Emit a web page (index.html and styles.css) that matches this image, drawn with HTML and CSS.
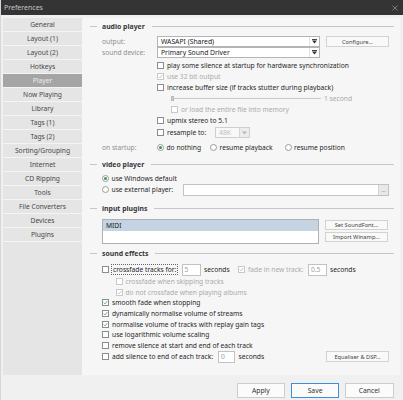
FILE: index.html
```html
<!DOCTYPE html>
<html>
<head>
<meta charset="utf-8">
<link rel="stylesheet" href="styles.css">
</head>
<body>
<div class="window">
  <div class="titlebar">
    <span>Preferences</span>
    <svg class="close" width="6" height="6" viewBox="0 0 6 6"><path d="M0.5 0.5 L5.5 5.5 M5.5 0.5 L0.5 5.5" stroke="#9a9a9a" stroke-width="0.7"/></svg>
  </div>
  <div class="main">
    <nav class="sidebar">
      <div class="nav-item">General</div>
      <div class="nav-item">Layout (1)</div>
      <div class="nav-item">Layout (2)</div>
      <div class="nav-item">Hotkeys</div>
      <div class="nav-item active">Player</div>
      <div class="nav-item">Now Playing</div>
      <div class="nav-item">Library</div>
      <div class="nav-item">Tags (1)</div>
      <div class="nav-item">Tags (2)</div>
      <div class="nav-item">Sorting/Grouping</div>
      <div class="nav-item">Internet</div>
      <div class="nav-item">CD Ripping</div>
      <div class="nav-item">Tools</div>
      <div class="nav-item">File Converters</div>
      <div class="nav-item">Devices</div>
      <div class="nav-item">Plugins</div>
    </nav>
    <div class="content">
      <div class="group-title"><span class="dash"></span><span>audio player</span><span class="rule"></span></div>
      <div class="group-body audio-body">
        <div class="row sel-row">
          <span class="label">output:</span>
          <div class="select wide"><span class="sel-text">WASAPI (Shared)</span><span class="sel-arrow"><svg width="5" height="5" viewBox="0 0 5 5"><rect x="0" y="0" width="5" height="1" fill="#444"/><polygon points="0,1.5 5,1.5 2.5,4.6" fill="#333"/></svg></span></div>
          <div class="btn btn-side">Configure...</div>
        </div>
        <div class="row sel-row">
          <span class="label">sound device:</span>
          <div class="select wide"><span class="sel-text">Primary Sound Driver</span><span class="sel-arrow"><svg width="5" height="5" viewBox="0 0 5 5"><rect x="0" y="0" width="5" height="1" fill="#444"/><polygon points="0,1.5 5,1.5 2.5,4.6" fill="#333"/></svg></span></div>
        </div>
        <div class="row ind-55 first-check">
          <span class="cb"></span><span>play some silence at startup for hardware synchronization</span>
        </div>
        <div class="row ind-55 dis">
          <span class="cb checked"><svg width="5" height="5" viewBox="0 0 5 5"><path d="M0.8 2.6 L2 3.8 L4.3 1.2" fill="none" stroke="#b0b0b0" stroke-width="0.8"/></svg></span><span>use 32 bit output</span>
        </div>
        <div class="row ind-55">
          <span class="cb"></span><span>increase buffer size (if tracks stutter during playback)</span>
        </div>
        <div class="row ind-69 slider-row">
          <span class="thumb"></span><span class="track"></span><span class="slider-val">1 second</span>
        </div>
        <div class="row ind-69 dis">
          <span class="cb"></span><span>or load the entire file into memory</span>
        </div>
        <div class="row ind-55">
          <span class="cb"></span><span>upmix stereo to 5.1</span>
        </div>
        <div class="row ind-55 resample-row">
          <span class="cb"></span><span class="resample-text">resample to:</span>
          <div class="select small dis-sel"><span class="sel-text">48K</span><span class="sel-arrow"><svg width="5" height="5" viewBox="0 0 5 5"><polygon points="0,1.5 5,1.5 2.5,4.6" fill="#b8b8b8"/></svg></span></div>
        </div>
        <div class="row startup-row">
          <span class="label">on startup:</span>
          <span class="opt opt1"><span class="radio on"><span class="dot"></span></span><span>do nothing</span></span>
          <span class="opt opt2"><span class="radio"></span><span>resume playback</span></span>
          <span class="opt"><span class="radio"></span><span>resume position</span></span>
        </div>
      </div>

      <div class="group-title video-title"><span class="dash"></span><span>video player</span><span class="rule"></span></div>
      <div class="group-body">
        <div class="row win-row">
          <span class="radio on"><span class="dot"></span></span><span>use Windows default</span>
        </div>
        <div class="row ext-row">
          <span class="radio"></span><span class="ext-label">use external player:</span>
          <div class="textbox ext-box"><span class="browse">...</span></div>
        </div>
      </div>

      <div class="group-title plugins-title"><span class="dash"></span><span>input plugins</span><span class="rule"></span></div>
      <div class="group-body">
        <div class="plugins-row">
          <div class="listbox"><div class="list-item sel">MIDI</div></div>
          <div class="btn-col">
            <div class="btn btn-side">Set SoundFont...</div>
            <div class="btn btn-side">Import Winamp...</div>
          </div>
        </div>
      </div>

      <div class="group-title fx-title"><span class="dash"></span><span>sound effects</span><span class="rule"></span></div>
      <div class="group-body">
        <div class="row cross-row">
          <span class="cb"></span><span class="focus-text">crossfade tracks for:</span>
          <span class="textbox num n5">5</span><span class="unit">seconds</span>
          <span class="cb checked dis-cb"><svg width="5" height="5" viewBox="0 0 5 5"><path d="M0.8 2.6 L2 3.8 L4.3 1.2" fill="none" stroke="#b0b0b0" stroke-width="0.8"/></svg></span><span class="fade-text dis">fade in new track:</span>
          <span class="textbox num n05">0.5</span><span class="unit2">seconds</span>
        </div>
        <div class="row fx ind-13 dis">
          <span class="cb"></span><span>crossfade when skipping tracks</span>
        </div>
        <div class="row fx ind-13 dis">
          <span class="cb checked"><svg width="5" height="5" viewBox="0 0 5 5"><path d="M0.8 2.6 L2 3.8 L4.3 1.2" fill="none" stroke="#b0b0b0" stroke-width="0.8"/></svg></span><span>do not crossfade when playing albums</span>
        </div>
        <div class="row fx">
          <span class="cb checked"><svg width="5" height="5" viewBox="0 0 5 5"><path d="M0.8 2.6 L2 3.8 L4.3 1.2" fill="none" stroke="#3f9e6a" stroke-width="0.9"/></svg></span><span>smooth fade when stopping</span>
        </div>
        <div class="row fx">
          <span class="cb checked"><svg width="5" height="5" viewBox="0 0 5 5"><path d="M0.8 2.6 L2 3.8 L4.3 1.2" fill="none" stroke="#3f9e6a" stroke-width="0.9"/></svg></span><span>dynamically normalise volume of streams</span>
        </div>
        <div class="row fx">
          <span class="cb checked"><svg width="5" height="5" viewBox="0 0 5 5"><path d="M0.8 2.6 L2 3.8 L4.3 1.2" fill="none" stroke="#3f9e6a" stroke-width="0.9"/></svg></span><span>normalise volume of tracks with replay gain tags</span>
        </div>
        <div class="row fx">
          <span class="cb"></span><span>use logarithmic volume scaling</span>
        </div>
        <div class="row fx">
          <span class="cb"></span><span>remove silence at start and end of each track</span>
        </div>
        <div class="row add-row">
          <span class="cb"></span><span class="add-text">add silence to end of each track:</span>
          <span class="textbox num n0">0</span><span>seconds</span>
          <div class="btn btn-side eq">Equaliser &amp; DSP...</div>
        </div>
      </div>
    </div>
  </div>
  <div class="footer">
    <div class="btn btn-foot">Apply</div>
    <div class="btn btn-foot save">Save</div>
    <div class="btn btn-foot">Cancel</div>
  </div>
</div>
</body>
</html>
```

FILE: styles.css
```css
html, body {
  margin: 0;
  padding: 0;
}
body {
  width: 403px;
  height: 400px;
  overflow: hidden;
  background: #f0f0f0;
  font-family: "Noto Sans", "Open Sans", sans-serif;
  font-size: 6.7px;
  color: #262626;
}
.window {
  display: flex;
  flex-direction: column;
  height: 400px;
  border-left: 1px solid #d6d6d6;
  box-sizing: border-box;
}
.titlebar {
  height: 15px;
  flex-shrink: 0;
  background: #343434;
  color: #c4c4c4;
  display: flex;
  align-items: center;
  justify-content: space-between;
  padding: 0 5px 0 3px;
  font-size: 7px;
}
.main {
  display: flex;
  height: 360px;
  padding: 3px 3px 0 2px;
  box-sizing: border-box;
}
.sidebar {
  width: 79px;
  flex-shrink: 0;
  background: #e5e5e5;
  display: flex;
  flex-direction: column;
}
.nav-item {
  height: 13px;
  border-bottom: 1px solid #f4f4f4;
  display: flex;
  align-items: center;
  justify-content: center;
  color: #474747;
}
.nav-item.active {
  background: #a5a5a5;
  color: #ececec;
}
.content {
  flex: 1;
  background: #f6f6f6;
  padding: 2px 6px 0 8px;
}
.group-title {
  height: 12px;
  display: flex;
  align-items: center;
  gap: 5px;
  font-weight: 700;
  font-size: 6.9px;
  color: #383838;
}
.dash {
  width: 7px;
  height: 1px;
  background: #c6c6c6;
}
.rule {
  flex: 1;
  height: 1px;
  background: #c6c6c6;
  margin-left: 2px;
}
.group-body {
  padding-left: 12px;
}
.audio-body {
  padding-top: 4px;
}
.row {
  display: flex;
  align-items: center;
  height: 11px;
  white-space: nowrap;
}
.label {
  width: 55px;
  flex-shrink: 0;
  color: #8e8e8e;
}
.ind-55 { padding-left: 55px; }
.ind-69 { padding-left: 69px; }
.ind-13 { padding-left: 13.5px; }
.dis { color: #ababab; }
.first-check { margin-top: 1.5px; }

.select {
  height: 11px;
  border: 1px solid #b4b4b4;
  background: #fff;
  display: flex;
  align-items: center;
  box-sizing: border-box;
}
.select.wide { width: 163px; }
.sel-text {
  flex: 1;
  padding-left: 3px;
  font-size: 6.8px;
  color: #1a1a1a;
}
.sel-arrow {
  width: 9px;
  height: 100%;
  display: flex;
  align-items: center;
  justify-content: center;
  border-left: 1px solid #e2e2e2;
}
.select.small {
  width: 35px;
  height: 11px;
  margin-left: 5px;
}
.dis-sel {
  border-color: #cfcfcf;
  background: #f8f8f8;
}
.dis-sel .sel-text { color: #bdbdbd; }
.dis-sel .sel-arrow { background: #ececec; border-left-color: #d4d4d4; }
.resample-row {
  height: 12px;
  margin-top: 1px;
}
.resample-text { width: 43px; }

.btn {
  display: flex;
  align-items: center;
  justify-content: center;
  background: #f9f9f9;
  border: 1px solid #d2d2d2;
  box-sizing: border-box;
  color: #444;
  white-space: nowrap;
}
.btn-side {
  width: 63px;
  height: 10.5px;
  font-size: 5.7px;
  margin-left: 6px;
}

.cb {
  width: 7px;
  height: 7px;
  border: 1px solid #8c8c8c;
  background: #fff;
  box-sizing: border-box;
  margin-right: 3px;
  flex-shrink: 0;
  display: flex;
  align-items: center;
  justify-content: center;
}
.dis .cb, .dis-cb {
  border-color: #c9c9c9;
}
.radio {
  width: 7px;
  height: 7px;
  border: 1px solid #9a9a9a;
  border-radius: 50%;
  background: #fff;
  box-sizing: border-box;
  margin-right: 2.5px;
  flex-shrink: 0;
  display: flex;
  align-items: center;
  justify-content: center;
}
.dot {
  width: 3px;
  height: 3px;
  border-radius: 50%;
  background: #2c9a52;
}
.opt {
  display: flex;
  align-items: center;
}
.opt1 { width: 53px; }
.opt2 { width: 74.5px; }
.startup-row { margin-top: 3px; }

.slider-row { height: 11px; }
.thumb {
  width: 3px;
  height: 5px;
  background: #cfcfcf;
  border: 1px solid #b9b9b9;
  box-sizing: border-box;
  flex-shrink: 0;
}
.track {
  width: 147px;
  height: 1px;
  background: #c9c9c9;
}
.slider-val {
  margin-left: 3px;
  color: #a8a8a8;
}

.video-title { margin-top: 6px; }
.win-row { margin-top: 2px; }
.ext-row { height: 12px; }
.ext-label { width: 71.5px; }
.textbox {
  background: #fff;
  border: 1px solid #c2c2c2;
  box-sizing: border-box;
}
.ext-box {
  width: 206px;
  height: 12px;
  display: flex;
  justify-content: flex-end;
  align-items: stretch;
}
.browse {
  width: 9px;
  background: #e8e8e8;
  border-left: 1px solid #d4d4d4;
  color: #777;
  font-size: 5px;
  display: flex;
  align-items: center;
  justify-content: center;
}

.plugins-title { margin-top: 7px; }
.plugins-row {
  display: flex;
  margin-top: 4px;
  height: 25px;
}
.listbox {
  width: 217px;
  height: 25px;
  background: #fff;
  border: 1px solid #b0b0b0;
  box-sizing: border-box;
}
.list-item {
  height: 11px;
  display: flex;
  align-items: center;
  padding-left: 3px;
  color: #1a1a1a;
}
.list-item.sel { background: #c5d4e3; }
.btn-col {
  display: flex;
  flex-direction: column;
  gap: 1.5px;
  padding-top: 1px;
}

.fx-title { margin-top: 4px; }
.cross-row {
  height: 12px;
  margin-top: 4px;
}
.focus-text {
  width: 67px;
  height: 11px;
  margin-left: -1px;
  border: 1px dotted #666;
  box-sizing: border-box;
  display: flex;
  align-items: center;
  padding-left: 1px;
}
.num {
  height: 12px;
  display: flex;
  align-items: center;
  padding-left: 2px;
  color: #a0a0a0;
}
.n5 { width: 19px; margin-left: 3.5px; }
.unit { width: 34px; margin-left: 3.5px; }
.fade-text { width: 57px; margin-left: 0; }
.n05 { width: 19px; margin-left: 3px; }
.unit2 { margin-left: 3px; }
.fx { height: 10.7px; }
.row.fx.ind-13 { height: 11px; }
.add-row { height: 11.6px; }
.add-text { width: 106px; }
.n0 { width: 16.5px; height: 11.6px; margin-right: 4px; }
.eq { margin-left: auto; margin-right: 5px; }

.footer {
  flex: 1;
  display: flex;
  justify-content: flex-end;
  align-items: flex-start;
  gap: 5.7px;
  padding: 8.3px 9.5px 0 0;
}
.btn-foot {
  width: 48.5px;
  height: 14.4px;
  font-size: 6.8px;
  color: #333;
  background: #fbfbfb;
  border-color: #cdcdcd;
}
.btn-foot.save {
  border-color: #3b8fdc;
}
```
